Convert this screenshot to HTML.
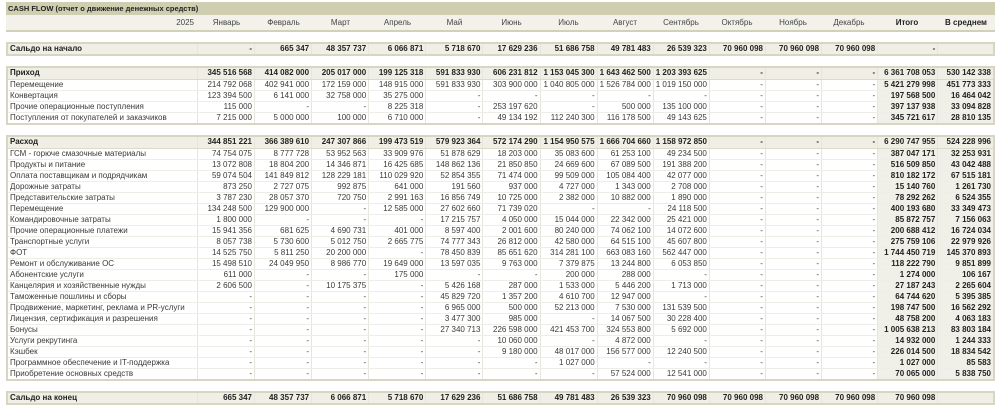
<!DOCTYPE html>
<html><head><meta charset="utf-8">
<style>
*{box-sizing:border-box;margin:0;padding:0}
body{width:1000px;height:415px;background:#fff;font-family:"Liberation Sans","DejaVu Sans",sans-serif;color:#3a3a3a;position:relative;overflow:hidden}
.title{position:absolute;left:6px;top:2px;width:989px;height:13px;background:#d0ceb0;font-size:7.5px;font-weight:bold;color:#222;line-height:13px;padding-left:2px}
table{position:absolute;left:6px;width:989px;border-collapse:collapse;table-layout:fixed}
td{height:11px;padding:0 2px;font-size:8px;line-height:10px;text-align:right;white-space:nowrap;overflow:hidden;border-left:1px solid #e6e6df;border-bottom:1px solid #eeeee8}
td:first-child{text-align:left;border-left:none}
.sec{border:2px solid #d8d6c2}
.sec tr.h td{background:#f0efe5;font-weight:bold;color:#222;height:12px;border-bottom:1px solid #dcdac8}
.sec td.t{background:#f1f0e8;font-weight:bold;color:#222}
.hdr{top:15px;background:#f3f2ea;border-bottom:2px solid #d2d0b8}
.hdr td{height:16px;text-align:center;border-left:none;border-bottom:none;color:#444}
.hdr td:first-child{text-align:right;padding-right:4px}
.hdr td.b{font-weight:bold;color:#222}
</style></head><body>
<div class="title">CASH FLOW (отчет о движение денежных средств)</div>
<table class="hdr"><colgroup><col style="width:192px"><col style="width:57px"><col style="width:57px"><col style="width:57px"><col style="width:57px"><col style="width:57px"><col style="width:57px"><col style="width:57px"><col style="width:56px"><col style="width:56px"><col style="width:56px"><col style="width:56px"><col style="width:56px"><col style="width:60px"><col style="width:58px"></colgroup>
<tr><td>2025</td><td>Январь</td><td>Февраль</td><td>Март</td><td>Апрель</td><td>Май</td><td>Июнь</td><td>Июль</td><td>Август</td><td>Сентябрь</td><td>Октябрь</td><td>Ноябрь</td><td>Декабрь</td><td class="b">Итого</td><td class="b">В среднем</td></tr></table>

<table class="sec" style="top:42px"><colgroup><col style="width:190px"><col style="width:57px"><col style="width:57px"><col style="width:57px"><col style="width:57px"><col style="width:57px"><col style="width:57px"><col style="width:57px"><col style="width:56px"><col style="width:56px"><col style="width:56px"><col style="width:56px"><col style="width:56px"><col style="width:60px"><col style="width:56px"></colgroup>
<tr class="h"><td>Сальдо на начало</td><td>-</td><td>665 347</td><td>48 357 737</td><td>6 066 871</td><td>5 718 670</td><td>17 629 236</td><td>51 686 758</td><td>49 781 483</td><td>26 539 323</td><td>70 960 098</td><td>70 960 098</td><td>70 960 098</td><td>-</td><td></td></tr></table>

<table class="sec" style="top:66px"><colgroup><col style="width:190px"><col style="width:57px"><col style="width:57px"><col style="width:57px"><col style="width:57px"><col style="width:57px"><col style="width:57px"><col style="width:57px"><col style="width:56px"><col style="width:56px"><col style="width:56px"><col style="width:56px"><col style="width:56px"><col style="width:60px"><col style="width:56px"></colgroup>
<tr class="h"><td>Приход</td><td>345 516 568</td><td>414 082 000</td><td>205 017 000</td><td>199 125 318</td><td>591 833 930</td><td>606 231 812</td><td>1 153 045 300</td><td>1 643 462 500</td><td>1 203 393 625</td><td>-</td><td>-</td><td>-</td><td>6 361 708 053</td><td>530 142 338</td></tr>
<tr><td>Перемещение</td><td>214 792 068</td><td>402 941 000</td><td>172 159 000</td><td>148 915 000</td><td>591 833 930</td><td>303 900 000</td><td>1 040 805 000</td><td>1 526 784 000</td><td>1 019 150 000</td><td>-</td><td>-</td><td>-</td><td class="t">5 421 279 998</td><td class="t">451 773 333</td></tr>
<tr><td>Конвертация</td><td>123 394 500</td><td>6 141 000</td><td>32 758 000</td><td>35 275 000</td><td>-</td><td>-</td><td>-</td><td>-</td><td>-</td><td>-</td><td>-</td><td>-</td><td class="t">197 568 500</td><td class="t">16 464 042</td></tr>
<tr><td>Прочие операционные поступления</td><td>115 000</td><td>-</td><td>-</td><td>8 225 318</td><td>-</td><td>253 197 620</td><td>-</td><td>500 000</td><td>135 100 000</td><td>-</td><td>-</td><td>-</td><td class="t">397 137 938</td><td class="t">33 094 828</td></tr>
<tr><td>Поступления от покупателей и заказчиков</td><td>7 215 000</td><td>5 000 000</td><td>100 000</td><td>6 710 000</td><td>-</td><td>49 134 192</td><td>112 240 300</td><td>116 178 500</td><td>49 143 625</td><td>-</td><td>-</td><td>-</td><td class="t">345 721 617</td><td class="t">28 810 135</td></tr>
</table>

<table class="sec" style="top:135px"><colgroup><col style="width:190px"><col style="width:57px"><col style="width:57px"><col style="width:57px"><col style="width:57px"><col style="width:57px"><col style="width:57px"><col style="width:57px"><col style="width:56px"><col style="width:56px"><col style="width:56px"><col style="width:56px"><col style="width:56px"><col style="width:60px"><col style="width:56px"></colgroup>
<tr class="h"><td>Расход</td><td>344 851 221</td><td>366 389 610</td><td>247 307 866</td><td>199 473 519</td><td>579 923 364</td><td>572 174 290</td><td>1 154 950 575</td><td>1 666 704 660</td><td>1 158 972 850</td><td>-</td><td>-</td><td>-</td><td>6 290 747 955</td><td>524 228 996</td></tr>
<tr><td>ГСМ - горюче смазочные материалы</td><td>74 754 075</td><td>8 777 728</td><td>53 952 563</td><td>33 909 976</td><td>51 878 629</td><td>18 203 000</td><td>35 083 600</td><td>61 253 100</td><td>49 234 500</td><td>-</td><td>-</td><td>-</td><td class="t">387 047 171</td><td class="t">32 253 931</td></tr>
<tr><td>Продукты и питание</td><td>13 072 808</td><td>18 804 200</td><td>14 346 871</td><td>16 425 685</td><td>148 862 136</td><td>21 850 850</td><td>24 669 600</td><td>67 089 500</td><td>191 388 200</td><td>-</td><td>-</td><td>-</td><td class="t">516 509 850</td><td class="t">43 042 488</td></tr>
<tr><td>Оплата поставщикам и подрядчикам</td><td>59 074 504</td><td>141 849 812</td><td>128 229 181</td><td>110 029 920</td><td>52 854 355</td><td>71 474 000</td><td>99 509 000</td><td>105 084 400</td><td>42 077 000</td><td>-</td><td>-</td><td>-</td><td class="t">810 182 172</td><td class="t">67 515 181</td></tr>
<tr><td>Дорожные затраты</td><td>873 250</td><td>2 727 075</td><td>992 875</td><td>641 000</td><td>191 560</td><td>937 000</td><td>4 727 000</td><td>1 343 000</td><td>2 708 000</td><td>-</td><td>-</td><td>-</td><td class="t">15 140 760</td><td class="t">1 261 730</td></tr>
<tr><td>Представительские затраты</td><td>3 787 230</td><td>28 057 370</td><td>720 750</td><td>2 991 163</td><td>16 856 749</td><td>10 725 000</td><td>2 382 000</td><td>10 882 000</td><td>1 890 000</td><td>-</td><td>-</td><td>-</td><td class="t">78 292 262</td><td class="t">6 524 355</td></tr>
<tr><td>Перемещение</td><td>134 248 500</td><td>129 900 000</td><td>-</td><td>12 585 000</td><td>27 602 660</td><td>71 739 020</td><td>-</td><td>-</td><td>24 118 500</td><td>-</td><td>-</td><td>-</td><td class="t">400 193 680</td><td class="t">33 349 473</td></tr>
<tr><td>Командировочные затраты</td><td>1 800 000</td><td>-</td><td>-</td><td>-</td><td>17 215 757</td><td>4 050 000</td><td>15 044 000</td><td>22 342 000</td><td>25 421 000</td><td>-</td><td>-</td><td>-</td><td class="t">85 872 757</td><td class="t">7 156 063</td></tr>
<tr><td>Прочие операционные платежи</td><td>15 941 356</td><td>681 625</td><td>4 690 731</td><td>401 000</td><td>8 597 400</td><td>2 001 600</td><td>80 240 000</td><td>74 062 100</td><td>14 072 600</td><td>-</td><td>-</td><td>-</td><td class="t">200 688 412</td><td class="t">16 724 034</td></tr>
<tr><td>Транспортные услуги</td><td>8 057 738</td><td>5 730 600</td><td>5 012 750</td><td>2 665 775</td><td>74 777 343</td><td>26 812 000</td><td>42 580 000</td><td>64 515 100</td><td>45 607 800</td><td>-</td><td>-</td><td>-</td><td class="t">275 759 106</td><td class="t">22 979 926</td></tr>
<tr><td>ФОТ</td><td>14 525 750</td><td>5 811 250</td><td>20 200 000</td><td>-</td><td>78 450 839</td><td>85 651 620</td><td>314 281 100</td><td>663 083 160</td><td>562 447 000</td><td>-</td><td>-</td><td>-</td><td class="t">1 744 450 719</td><td class="t">145 370 893</td></tr>
<tr><td>Ремонт и обслуживание ОС</td><td>15 498 510</td><td>24 049 950</td><td>8 986 770</td><td>19 649 000</td><td>13 597 035</td><td>9 763 000</td><td>7 379 875</td><td>13 244 800</td><td>6 053 850</td><td>-</td><td>-</td><td>-</td><td class="t">118 222 790</td><td class="t">9 851 899</td></tr>
<tr><td>Абонентские услуги</td><td>611 000</td><td>-</td><td>-</td><td>175 000</td><td>-</td><td>-</td><td>200 000</td><td>288 000</td><td>-</td><td>-</td><td>-</td><td>-</td><td class="t">1 274 000</td><td class="t">106 167</td></tr>
<tr><td>Канцелярия и хозяйственные нужды</td><td>2 606 500</td><td>-</td><td>10 175 375</td><td>-</td><td>5 426 168</td><td>287 000</td><td>1 533 000</td><td>5 446 200</td><td>1 713 000</td><td>-</td><td>-</td><td>-</td><td class="t">27 187 243</td><td class="t">2 265 604</td></tr>
<tr><td>Таможенные пошлины и сборы</td><td>-</td><td>-</td><td>-</td><td>-</td><td>45 829 720</td><td>1 357 200</td><td>4 610 700</td><td>12 947 000</td><td>-</td><td>-</td><td>-</td><td>-</td><td class="t">64 744 620</td><td class="t">5 395 385</td></tr>
<tr><td>Продвижение, маркетинг, реклама и PR-услуги</td><td>-</td><td>-</td><td>-</td><td>-</td><td>6 965 000</td><td>500 000</td><td>52 213 000</td><td>7 530 000</td><td>131 539 500</td><td>-</td><td>-</td><td>-</td><td class="t">198 747 500</td><td class="t">16 562 292</td></tr>
<tr><td>Лицензия, сертификация и разрешения</td><td>-</td><td>-</td><td>-</td><td>-</td><td>3 477 300</td><td>985 000</td><td>-</td><td>14 067 500</td><td>30 228 400</td><td>-</td><td>-</td><td>-</td><td class="t">48 758 200</td><td class="t">4 063 183</td></tr>
<tr><td>Бонусы</td><td>-</td><td>-</td><td>-</td><td>-</td><td>27 340 713</td><td>226 598 000</td><td>421 453 700</td><td>324 553 800</td><td>5 692 000</td><td>-</td><td>-</td><td>-</td><td class="t">1 005 638 213</td><td class="t">83 803 184</td></tr>
<tr><td>Услуги рекрутинга</td><td>-</td><td>-</td><td>-</td><td>-</td><td>-</td><td>10 060 000</td><td>-</td><td>4 872 000</td><td>-</td><td>-</td><td>-</td><td>-</td><td class="t">14 932 000</td><td class="t">1 244 333</td></tr>
<tr><td>Кэшбек</td><td>-</td><td>-</td><td>-</td><td>-</td><td>-</td><td>9 180 000</td><td>48 017 000</td><td>156 577 000</td><td>12 240 500</td><td>-</td><td>-</td><td>-</td><td class="t">226 014 500</td><td class="t">18 834 542</td></tr>
<tr><td>Программное обеспечение и IT-поддержка</td><td>-</td><td>-</td><td>-</td><td>-</td><td>-</td><td>-</td><td>1 027 000</td><td>-</td><td>-</td><td>-</td><td>-</td><td>-</td><td class="t">1 027 000</td><td class="t">85 583</td></tr>
<tr><td>Приобретение основных средств</td><td>-</td><td>-</td><td>-</td><td>-</td><td>-</td><td>-</td><td>-</td><td>57 524 000</td><td>12 541 000</td><td>-</td><td>-</td><td>-</td><td class="t">70 065 000</td><td class="t">5 838 750</td></tr>
</table>

<table class="sec" style="top:391px"><colgroup><col style="width:190px"><col style="width:57px"><col style="width:57px"><col style="width:57px"><col style="width:57px"><col style="width:57px"><col style="width:57px"><col style="width:57px"><col style="width:56px"><col style="width:56px"><col style="width:56px"><col style="width:56px"><col style="width:56px"><col style="width:60px"><col style="width:56px"></colgroup>
<tr class="h"><td>Сальдо на конец</td><td>665 347</td><td>48 357 737</td><td>6 066 871</td><td>5 718 670</td><td>17 629 236</td><td>51 686 758</td><td>49 781 483</td><td>26 539 323</td><td>70 960 098</td><td>70 960 098</td><td>70 960 098</td><td>70 960 098</td><td>70 960 098</td><td></td></tr></table>
</body></html>
